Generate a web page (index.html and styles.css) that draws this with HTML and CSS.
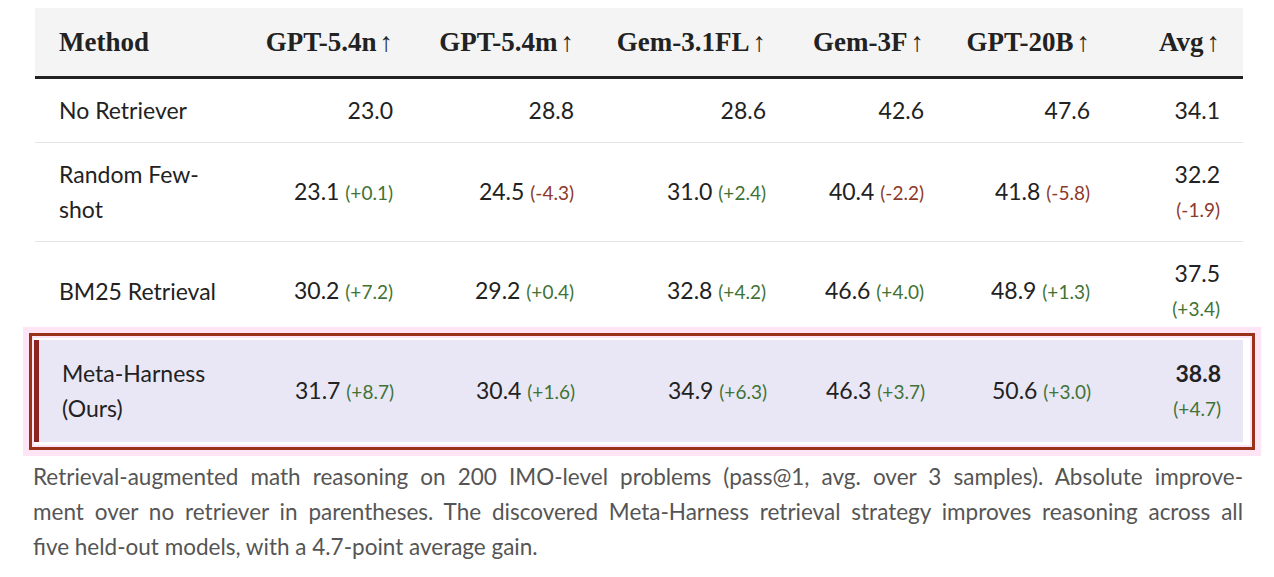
FILE: index.html
```html
<!DOCTYPE html>
<html lang="en">
<head>
<meta charset="utf-8">
<title>Meta-Harness retrieval results</title>
<link rel="stylesheet" href="styles.css">
</head>
<body>
<div class="wrap">
  <div class="table">
    <div class="row head">
      <div class="cell first">Method</div>
      <div class="cell">GPT-5.4n<span class="arr">↑</span></div>
      <div class="cell">GPT-5.4m<span class="arr">↑</span></div>
      <div class="cell">Gem-3.1FL<span class="arr">↑</span></div>
      <div class="cell">Gem-3F<span class="arr">↑</span></div>
      <div class="cell">GPT-20B<span class="arr">↑</span></div>
      <div class="cell">Avg<span class="arr">↑</span></div>
    </div>
    <div class="row body">
      <div class="cell first">No Retriever</div>
      <div class="cell">23.0</div>
      <div class="cell">28.8</div>
      <div class="cell">28.6</div>
      <div class="cell">42.6</div>
      <div class="cell">47.6</div>
      <div class="cell avg">34.1</div>
    </div>
    <div class="row body">
      <div class="cell first">Random Few-<br>shot</div>
      <div class="cell">23.1 <span class="d pos">(+0.1)</span></div>
      <div class="cell">24.5 <span class="d neg">(-4.3)</span></div>
      <div class="cell">31.0 <span class="d pos">(+2.4)</span></div>
      <div class="cell">40.4 <span class="d neg">(-2.2)</span></div>
      <div class="cell">41.8 <span class="d neg">(-5.8)</span></div>
      <div class="cell avg">32.2 <span class="d neg">(-1.9)</span></div>
    </div>
    <div class="row body last">
      <div class="cell first">BM25 Retrieval</div>
      <div class="cell">30.2 <span class="d pos">(+7.2)</span></div>
      <div class="cell">29.2 <span class="d pos">(+0.4)</span></div>
      <div class="cell">32.8 <span class="d pos">(+4.2)</span></div>
      <div class="cell">46.6 <span class="d pos">(+4.0)</span></div>
      <div class="cell">48.9 <span class="d pos">(+1.3)</span></div>
      <div class="cell avg">37.5 <span class="d pos">(+3.4)</span></div>
    </div>
    <div class="row body ours">
      <div class="cell first">Meta-Harness<br>(Ours)</div>
      <div class="cell">31.7 <span class="d pos">(+8.7)</span></div>
      <div class="cell">30.4 <span class="d pos">(+1.6)</span></div>
      <div class="cell">34.9 <span class="d pos">(+6.3)</span></div>
      <div class="cell">46.3 <span class="d pos">(+3.7)</span></div>
      <div class="cell">50.6 <span class="d pos">(+3.0)</span></div>
      <div class="cell avg"><strong>38.8</strong> <span class="d pos">(+4.7)</span></div>
    </div>
  </div>
  <p class="caption">
    <span class="line just">Retrieval-augmented math reasoning on 200 IMO-level problems (pass@1, avg. over 3 samples). Absolute improve-</span>
    <span class="line just">ment over no retriever in parentheses. The discovered Meta-Harness retrieval strategy improves reasoning across all</span>
    <span class="line">five held-out models, with a 4.7-point average gain.</span>
  </p>
</div>
</body>
</html>
```

FILE: styles.css
```css
html, body {
  margin: 0;
  padding: 0;
  background: #ffffff;
}

.wrap {
  width: 1208px;
  padding: 8px 0 0 35px;
}

.table {
  width: 1208px;
  font-family: Lato, "Liberation Sans", sans-serif;
  color: #222222;
}

.row {
  display: grid;
  grid-template-columns: 205px 176px 181px 192px 158px 166px 130px;
  align-items: center;
}

.cell {
  padding: 0 23px 0 24px;
  text-align: right;
}

.cell.first {
  text-align: left;
}

.head {
  background: #f4f4f4;
  border-bottom: 3px solid #222222;
  font-family: "Liberation Serif", serif;
  font-weight: bold;
  font-size: 27px;
  line-height: 36px;
  color: #222222;
}

.head .cell {
  padding-top: 16px;
  padding-bottom: 16px;
  white-space: nowrap;
  padding-left: 0;
}

.head .cell.first {
  padding-left: 24px;
}

.arr {
  font-weight: normal;
  margin-left: 3px;
}

.body {
  font-size: 23px;
  line-height: 35px;
  border-bottom: 1px solid #e4e4e4;
}

.body .cell {
  padding-top: 14px;
  padding-bottom: 14px;
}

.body.last {
  border-bottom: none;
}

.d {
  font-size: 19px;
}

.pos {
  color: #3f7336;
}

.neg {
  color: #8c3a2b;
}

.avg .d {
  display: block;
}

.avg strong {
  font-weight: bold;
}

.ours {
  position: relative;
  margin-left: -2px;
  grid-template-columns: 202px 176px 181px 192px 158px 166px 130px;
  background: #e9e7f6;
  border-left: 6px solid #8b2323;
  border-bottom: none;
}

.ours .cell {
  padding-top: 16px;
  padding-bottom: 16px;
}

.ours .cell.first {
  padding-left: 23px;
}

.ours::before {
  content: "";
  position: absolute;
  top: -7px;
  left: -10px;
  right: -12px;
  bottom: -8px;
  border: 3px solid #983218;
  box-shadow: 0 0 0 6px #fde5f6, inset 0 0 0 2px #fde5f6;
  pointer-events: none;
}

.caption {
  margin: 17px 0 0 -2px;
  width: 1210px;
  font-family: Lato, "Liberation Sans", sans-serif;
  font-size: 22.5px;
  line-height: 35px;
  color: #555555;
}

.line {
  display: block;
  white-space: nowrap;
}

.line.just {
  text-align: justify;
  text-align-last: justify;
}
```
